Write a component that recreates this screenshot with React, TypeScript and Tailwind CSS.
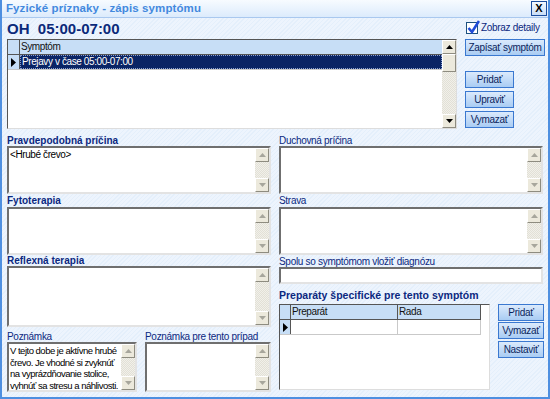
import React from "react";

const font = "font-['Liberation_Sans',Arial,sans-serif]";
const pattern =
  "bg-[repeating-linear-gradient(135deg,#e4effb_0px,#e4effb_1px,#edf4fd_1px,#edf4fd_3px)]";
const track =
  "bg-[repeating-conic-gradient(#f1f0ea_0%_25%,#e2e0d6_0%_50%)] bg-[length:2px_2px]";

function Arrow({ dir, dark }: { dir: "up" | "down"; dark?: boolean }) {
  return (
    <svg width="7" height="4" viewBox="0 0 7 4">
      <polygon
        points={dir === "up" ? "0,4 7,4 3.5,0" : "0,0 7,0 3.5,4"}
        fill={dark ? "#000" : "#a7a69c"}
      />
    </svg>
  );
}

function ScrollButton({ dir, dark }: { dir: "up" | "down"; dark?: boolean }) {
  return (
    <div className="flex h-[14px] w-[14px] items-center justify-center border border-t-white border-l-white border-r-[#8e8c80] border-b-[#8e8c80] bg-[#ece9dc]">
      <Arrow dir={dir} dark={dark} />
    </div>
  );
}

function Scrollbar({ dark, thumb }: { dark?: boolean; thumb?: boolean }) {
  return (
    <div className={`flex w-[14px] shrink-0 flex-col ${track}`}>
      <ScrollButton dir="up" dark={dark} />
      {thumb && (
        <div className="h-[18px] w-[14px] border border-t-white border-l-white border-r-[#8e8c80] border-b-[#8e8c80] bg-[#ece9dc]" />
      )}
      <div className="flex-1" />
      <ScrollButton dir="down" dark={dark} />
    </div>
  );
}

function Memo({
  h,
  text,
  className = "",
  textClass = "text-[10px] leading-[11.5px] tracking-[-0.4px]",
}: {
  h: string;
  text?: string;
  className?: string;
  textClass?: string;
}) {
  return (
    <div
      className={`flex ${h} shrink-0 overflow-hidden border-2 border-t-[#6f6f6f] border-l-[#6f6f6f] border-r-[#e3e3e3] border-b-[#e3e3e3] bg-white ${className}`}
    >
      <div className={`flex-1 overflow-hidden whitespace-pre px-[1px] pt-[1px] text-black ${textClass}`}>
        {text}
      </div>
      <Scrollbar />
    </div>
  );
}

function Label({ children, bold }: { children: React.ReactNode; bold?: boolean }) {
  return (
    <div
      className={`h-[10px] text-[10px] leading-[10px] text-[#0b2880] ${bold ? "font-bold" : "tracking-[-0.3px]"}`}
    >
      {children}
    </div>
  );
}

function Btn({ children, w }: { children: React.ReactNode; w: string }) {
  return (
    <div
      className={`flex h-[17px] ${w} items-center justify-center border border-[#3a78d0] bg-[linear-gradient(#dbeafc,#a9ccf3)] text-[10px] tracking-[-0.3px] text-[#0b1f5c]`}
    >
      {children}
    </div>
  );
}

function RowMarker() {
  return (
    <svg width="5" height="9" viewBox="0 0 5 9">
      <polygon points="0,0 5,4.5 0,9" fill="#000" />
    </svg>
  );
}

export default function App() {
  return (
    <div className={`${font} flex h-[399px] w-[550px] flex-col overflow-hidden border-x-2 border-b-2 border-[#4e8fe0] bg-white`}>
      {/* title bar */}
      <div className="flex h-[18px] shrink-0 items-center justify-between border-b border-[#a9c8ef] bg-[linear-gradient(#f7fbff,#dcebfc)] pl-[4px] pr-[1px]">
        <span className="text-[11.5px] font-bold tracking-[0.1px] text-[#4389de]">
          Fyzické príznaky - zápis symptómu
        </span>
        <div className="flex h-[15px] w-[16px] items-center justify-center border border-[#1d4e9e] bg-[linear-gradient(#f4f9ff,#c9def7)] text-[11px] font-bold leading-none text-black">
          X
        </div>
      </div>

      <div className={`flex flex-1 flex-col overflow-hidden ${pattern} pl-[5px] pr-[3px]`}>
        {/* symptom list and its buttons */}
        <div className="flex gap-[8px]">
          <div className="flex w-[451px] flex-col">
            <div className="h-[21px] whitespace-pre pt-[2px] text-[15px] font-bold leading-[18px] text-[#0b2a7a]">
              {"OH  05:00-07:00"}
            </div>
            <div className="flex h-[90px] border border-t-[#555] border-l-[#555] border-r-[#ddd] border-b-[#ddd] bg-white">
              <div className="flex flex-1 flex-col">
                <div className="flex h-[15px] border-b border-[#555] bg-[#c7def6]">
                  <div className="w-[12px] border-r border-[#555]" />
                  <div className="flex-1 pl-[1px] text-[10px] leading-[14px] tracking-[-0.4px] text-[#111]">Symptóm</div>
                </div>
                <div className="flex h-[15px] border-b border-[#c9c9c9]">
                  <div className="flex w-[12px] items-center justify-center border-r border-[#555] bg-[#c7def6]">
                    <RowMarker />
                  </div>
                  <div className="flex-1 border border-dotted border-[#8aa0d0] bg-[#0a2465] pl-[1px] text-[10px] leading-[12px] tracking-[-0.4px] text-white">
                    Prejavy v čase 05:00-07:00
                  </div>
                </div>
              </div>
              <Scrollbar dark thumb />
            </div>
          </div>
          <div className="flex flex-col pt-[3px]">
            <div className="flex h-[13px] items-center gap-[3px] pl-[1px]">
              <div className="relative h-[12px] w-[12px] border border-[#1c5180] bg-white">
                <svg className="absolute -top-[3px] left-0" width="13" height="14" viewBox="0 0 13 14">
                  <path d="M1.5 8 L5 12 L12 1" stroke="#1f4bd8" strokeWidth="2.6" fill="none" />
                </svg>
              </div>
              <span className="text-[10px] tracking-[-0.3px] text-[#0b2880]">Zobraz detaily</span>
            </div>
            <div className="mt-[5px]">
              <Btn w="w-[80px]">Zapísať symptóm</Btn>
            </div>
            <div className="mt-[15px] flex flex-col gap-[3px]">
              <Btn w="w-[49px]">Pridať</Btn>
              <Btn w="w-[49px]">Upraviť</Btn>
              <Btn w="w-[49px]">Vymazať</Btn>
            </div>
          </div>
        </div>

        {/* detail fields */}
        <div className="mt-[7px] flex gap-[8px]">
          <div className="flex w-[264px] flex-col">
            <Label bold>Pravdepodobná príčina</Label>
            <Memo h="h-[48px]" text="<Hrubé črevo>" />
            <div className="mt-[2px]" />
            <Label bold>Fytoterapia</Label>
            <Memo h="h-[48px]" className="mt-[1px]" />
            <div className="mt-[1px]" />
            <Label bold>Reflexná terapia</Label>
            <Memo h="h-[61px]" />
            <div className="mt-[5px] flex gap-[8px]">
              <div className="flex w-[130px] flex-col">
                <Label>Poznámka</Label>
                <Memo
                  h="h-[50px]"
                  textClass="text-[9.5px] leading-[11.5px] tracking-[-0.5px]"
                  text={"V tejto dobe je aktívne hrubé\nčrevo. Je vhodné si zvyknúť\nna vyprázdňovanie stolice,\nvyhnúť sa stresu a náhlivosti."}
                />
              </div>
              <div className="flex flex-1 flex-col">
                <Label>Poznámka pre tento prípad</Label>
                <Memo h="h-[50px]" />
              </div>
            </div>
          </div>

          <div className="flex w-[266px] flex-col">
            <div className="w-[264px]">
              <Label>Duchovná príčina</Label>
              <Memo h="h-[48px]" />
              <div className="mt-[2px]" />
              <Label>Strava</Label>
              <Memo h="h-[48px]" className="mt-[1px]" />
              <div className="mt-[2px]" />
              <Label>Spolu so symptómom vložiť diagnózu</Label>
              <div className="h-[17px] border-2 border-t-[#6f6f6f] border-l-[#6f6f6f] border-r-[#e3e3e3] border-b-[#e3e3e3] bg-white" />
            </div>
            <div className="mt-[5px] h-[12px] text-[10.5px] font-bold leading-[12px] text-[#0b2880]">
              Preparáty špecifické pre tento symptóm
            </div>
            <div className="mt-[3px] flex gap-[8px]">
              <div className="h-[86px] w-[211px] border border-t-[#555] border-l-[#555] border-r-[#ddd] border-b-[#ddd] bg-white">
                <div className="flex h-[15px] w-[201px] border-b border-[#555] bg-[#c7def6] text-[10px] leading-[14px] tracking-[-0.4px] text-[#111]">
                  <div className="w-[11px] border-r border-[#555]" />
                  <div className="w-[107px] border-r border-[#555] pl-[1px]">Preparát</div>
                  <div className="flex-1 border-r border-[#555] pl-[1px]">Rada</div>
                </div>
                <div className="flex h-[15px] w-[201px] border-b border-[#c9c9c9]">
                  <div className="flex w-[11px] items-center justify-center border-r border-[#555] bg-[#c7def6]">
                    <RowMarker />
                  </div>
                  <div className="w-[107px] border-r border-[#c9c9c9]" />
                  <div className="flex-1 border-r border-[#c9c9c9]" />
                </div>
              </div>
              <div className="flex flex-col gap-[1px]">
                <Btn w="w-[46px]">Pridať</Btn>
                <Btn w="w-[46px]">Vymazať</Btn>
                <div className="mt-[1px]">
                  <Btn w="w-[46px]">Nastaviť</Btn>
                </div>
              </div>
            </div>
          </div>
        </div>
      </div>
    </div>
  );
}
